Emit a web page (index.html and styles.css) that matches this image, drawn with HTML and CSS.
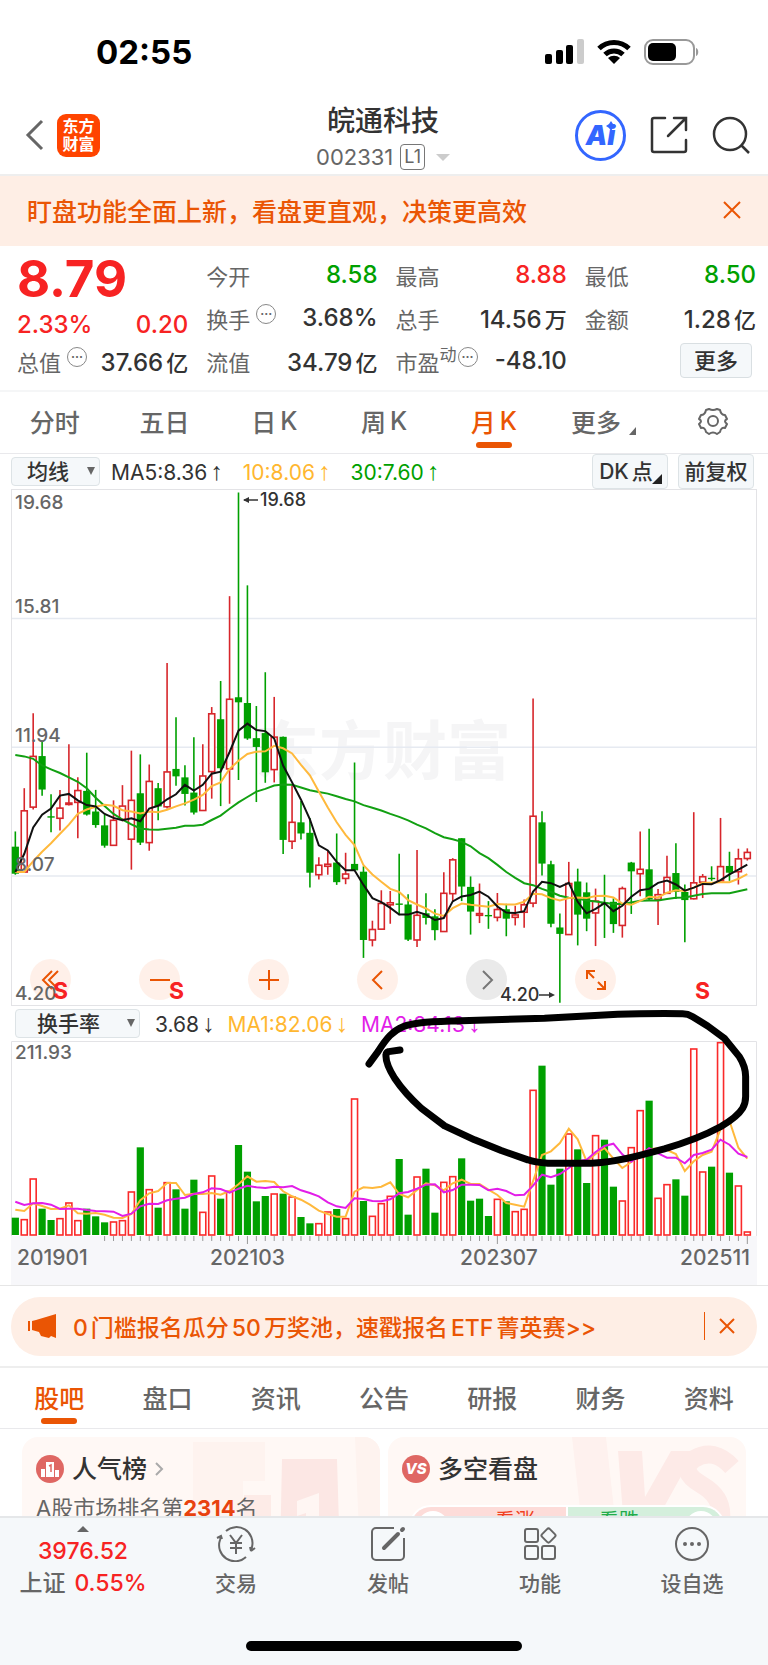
FILE: index.html
```
<!DOCTYPE html>
<html lang="zh-CN">

<head>
    <meta charset="UTF-8">
    <meta name="viewport" content="width=device-width, initial-scale=1.0">
    <title>皖通科技 002331</title>
    <link rel="stylesheet" href="styles.css">
</head>

<body>
    <div class="app">
        <div class="status-bar">
            <span class="clock">02:55</span>
            <div class="status-icons">
                <svg width="39" height="26" viewBox="0 0 39 26">
                    <rect x="0" y="15" width="7" height="10" rx="2" />
                    <rect x="11" y="11" width="7" height="14" rx="2" />
                    <rect x="21" y="6" width="7" height="19" rx="2" />
                    <rect x="32" y="0" width="7" height="25" rx="2" fill="#ccc" />
                </svg>
                <svg width="36" height="26" viewBox="0 0 36 26">
                    <path d="M3 9.500a21.500 21.500 0 0 1 30 0M9 15.500a13 13 0 0 1 18 0" fill="none" stroke="#000" stroke-width="5" />
                    <path d="M18 25l-6-6a9 9 0 0 1 12 0z" />
                </svg>
                <svg width="56" height="26" viewBox="0 0 56 26">
                    <rect x="1" y="1" width="49" height="24" rx="8" fill="none" stroke="#999" stroke-width="2" />
                    <rect x="4" y="4" width="28" height="18" rx="5" />
                    <path d="M52 9c3 1 3 7 0 8z" fill="#999" />
                </svg>
            </div>
        </div>

        <header class="header">
            <div class="header-left">
                <button class="icon-button" aria-label="返回">
                    <svg width="20" height="32" viewBox="0 0 20 32"><path d="M17 2L3 16l14 14" fill="none" stroke="#666" stroke-width="3" /></svg>
                </button>
                <a href="#" class="logo"><span>东方</span><span>财富</span></a>
            </div>
            <div class="stock">
                <h1>皖通科技</h1>
                <button class="stock-code">002331 <span class="level">L1</span><span class="caret"></span></button>
            </div>
            <div class="header-right">
                <button class="ai-button">Ai<svg class="ai-star" width="10" height="10" viewBox="0 0 10 10"><path d="M5 0l2 3 3 2-3 2-2 3-2-3-3-2 3-2z" fill="#3366ff" /></svg></button>
                <button class="icon-button" aria-label="分享">
                    <svg width="38" height="38" viewBox="0 0 38 38" fill="none" stroke="#333" stroke-width="2.500" stroke-linecap="round"><path d="M15 2H4a2 2 0 0 0-2 2v30a2 2 0 0 0 2 2h30a2 2 0 0 0 2-2V24M24 2h12v12M36 2L18 20" /></svg>
                </button>
                <button class="icon-button" aria-label="搜索">
                    <svg width="38" height="38" viewBox="0 0 38 38" fill="none" stroke="#333" stroke-width="2.500"><circle cx="18" cy="18" r="16" /><path d="M29 29l8 8" /></svg>
                </button>
            </div>
        </header>

        <main class="content">
            <div class="notice">
                <span>盯盘功能全面上新，看盘更直观，决策更高效</span>
                <button class="icon-button" aria-label="关闭">
                    <svg width="18" height="18" viewBox="0 0 18 18"><path d="M1 1l16 16M17 1L1 17" stroke="#ea5504" stroke-width="2" /></svg>
                </button>
            </div>

            <section class="quote">
                <div class="quote-col">
                    <div class="price">8.79</div>
                    <div class="quote-item change"><span>2.33%</span><span>0.20</span></div>
                    <div class="quote-item"><span class="label">总值<i class="info">···</i></span><b>37.66<em>亿</em></b></div>
                </div>
                <div class="quote-col">
                    <div class="quote-item"><span class="label">今开</span><b class="down">8.58</b></div>
                    <div class="quote-item"><span class="label">换手<i class="info">···</i></span><b>3.68%</b></div>
                    <div class="quote-item"><span class="label">流值</span><b>34.79<em>亿</em></b></div>
                </div>
                <div class="quote-col">
                    <div class="quote-item"><span class="label">最高</span><b class="up">8.88</b></div>
                    <div class="quote-item"><span class="label">总手</span><b>14.56<em>万</em></b></div>
                    <div class="quote-item"><span class="label">市盈<small>动</small><i class="info tight">···</i></span><b>-48.10</b></div>
                </div>
                <div class="quote-col">
                    <div class="quote-item"><span class="label">最低</span><b class="down">8.50</b></div>
                    <div class="quote-item"><span class="label">金额</span><b>1.28<em>亿</em></b></div>
                    <div class="quote-item end"><button class="more-button">更多</button></div>
                </div>
            </section>

            <nav class="tabs">
                <a href="#">分时</a>
                <a href="#">五日</a>
                <a href="#">日<em>K</em></a>
                <a href="#">周<em>K</em></a>
                <a href="#" class="active">月<em>K</em></a>
                <a href="#">更多<i class="corner"></i></a>
                <a href="#" aria-label="设置">
                    <svg width="30" height="28" viewBox="0 0 30 28" fill="none" stroke="#666" stroke-width="2"><path d="M11 2Q15 4 19 2L22 3Q23 8 27 8L29 12Q25 14 29 17L27 21Q23 20 22 25L19 27Q15 24 11 27L8 25Q7 20 3 21L1 17Q5 14 1 12L3 8Q7 8 8 3Z" stroke-linejoin="round" /><circle cx="15" cy="14" r="5" /></svg>
                </a>
            </nav>

            <div class="chart-bar">
                <div class="select-box">
                    <select aria-label="主图指标"><option>均线</option></select>
                </div>
                <div class="legend">
                    <span>MA5:8.36<i>↑</i></span>
                    <span class="yellow">10:8.06<i>↑</i></span>
                    <span class="down">30:7.60<i>↑</i></span>
                </div>
                <div class="chart-actions">
                    <button class="dk">DK<em>点</em></button>
                    <button>前复权</button>
                </div>
            </div>

            <div class="chart">
                <svg id="kline" viewBox="0 0 746 517"></svg>
                <div class="chart-tools">
                    <button aria-label="最早"><svg width="20" height="20" viewBox="0 0 20 20"><path d="M11 1l-9 9 9 9M17 1l-9 9 9 9" /></svg></button>
                    <button aria-label="缩小"><svg width="20" height="20" viewBox="0 0 20 20"><path d="M0 10h20" /></svg></button>
                    <button aria-label="放大"><svg width="20" height="20" viewBox="0 0 20 20"><path d="M0 10h20M10 0v20" /></svg></button>
                    <button aria-label="左移"><svg width="20" height="20" viewBox="0 0 20 20"><path d="M14 1l-9 9 9 9" /></svg></button>
                    <button class="gray" aria-label="右移"><svg width="20" height="20" viewBox="0 0 20 20"><path d="M6 1l9 9-9 9" /></svg></button>
                    <button aria-label="全屏"><svg width="20" height="20" viewBox="0 0 20 20"><path d="M1 9V1h8M1 1l7 7M19 11v8h-8M19 19l-7-7" /></svg></button>
                </div>
                <svg class="marks" viewBox="0 0 746 517">
                    <text x="4" y="20">19.68</text>
                    <text x="4" y="124">15.81</text>
                    <text x="4" y="253">11.94</text>
                    <text x="4" y="382">8.07</text>
                    <text x="4" y="511">4.20</text>
                    <text x="42" y="510" class="sell">S</text>
                    <text x="158" y="510" class="sell">S</text>
                    <text x="684" y="510" class="sell">S</text>
                </svg>
            </div>

            <div class="volume">
                <div class="volume-bar">
                    <div class="select-box wide">
                        <select aria-label="副图指标"><option>换手率</option></select>
                    </div>
                    <div class="legend">
                        <span>3.68<i>↓</i></span>
                        <span class="yellow">MA1:82.06<i>↓</i></span>
                        <span class="magenta">MA2:84.13<i>↓</i></span>
                    </div>
                </div>
                <svg id="turnover" viewBox="0 0 746 244"></svg>
                <svg class="scribble" viewBox="0 0 746 279">
                    <path transform="translate(367 -6) scale(.333)" d="M-27 192L0 155C25 115 45 92 75 80C110 66 150 66 250 62L500 55L720 43Q800 40 915 41Q930 41 945 50L990 78L1040 115L1085 170Q1104 200 1104 230V290Q1104 310 1095 325Q1080 350 1030 380Q960 418 860 447L780 468Q700 488 640 490H510Q470 488 450 480L370 452L290 420L200 378L130 325Q80 280 50 235Q22 190 24 165Q24 158 32 155L66 150" />
                </svg>
            </div>

            <div class="promo-row">
                <div class="promo">
                    <svg width="28" height="24" viewBox="0 0 28 24" fill="#ea5504"><rect y="7" width="2" height="10" /><path d="M4 7l4-1L28 0v24l-5-2-2 2-8-2-2-4-7-2z" /></svg>
                    <a href="#"><em>0</em>门槛报名瓜分<em>50</em>万奖池，速戳报名<em>ETF</em>菁英赛&gt;&gt;</a>
                    <button class="icon-button" aria-label="关闭">
                        <svg width="16" height="16" viewBox="0 0 16 16"><path d="M1 1l14 14M15 1L1 15" stroke="#ea5504" stroke-width="2" /></svg>
                    </button>
                </div>
            </div>

            <nav class="tabs sub-tabs">
                <a href="#" class="active">股吧</a>
                <a href="#">盘口</a>
                <a href="#">资讯</a>
                <a href="#">公告</a>
                <a href="#">研报</a>
                <a href="#">财务</a>
                <a href="#">资料</a>
            </nav>

            <div class="cards">
                <div class="card">
                    <svg class="card-art" width="190" height="120" viewBox="0 0 190 120">
                        <path d="M3 5h72v39H53v76H3z" fill="#fef3ef" /><path d="M54 58h27v62H54z" fill="#fdebe7" /><path d="M92 22h55l3 98H90z" fill="#fce7e4" /><path d="M107 64l22-8v64h-13V76l-9 3z" fill="#fff6f3" /><path d="M165 0h25v120h-20z" fill="#fef3ef" />
                    </svg>
                    <h2>
                        <svg width="28" height="28" viewBox="0 0 28 28"><circle cx="14" cy="14" r="14" fill="#df6763" /><path d="M5 14h4v8H5zM10 7h8v15h-8zM19 15h4v7h-4z" fill="#fff" /><path d="M13 11l2-1v7" fill="none" stroke="#df6763" stroke-width="1.500" /></svg>
                        人气榜
                        <svg width="9" height="14" viewBox="0 0 9 14"><path d="M1 1l6 6-6 6" fill="none" stroke="#aaa" stroke-width="2" /></svg>
                    </h2>
                    <p>A股市场排名第<b>2314</b>名</p>
                </div>
                <div class="card">
                    <svg class="card-art" width="190" height="120" viewBox="0 0 190 120">
                        <path d="M16 0h34l10 90H26z" fill="#fef1ee" /><path d="M62 14h24l3 46 26-46h24l-42 76H68z" fill="#fdeae7" /><path d="M176 30Q158 10 138 22q-16 12 8 26 24 14 18 40" fill="none" stroke="#fdeae7" stroke-width="18" />
                    </svg>
                    <h2>
                        <span class="vs">VS</span>
                        多空看盘
                    </h2>
                    <div class="vote"><span class="bull">看涨</span><span class="bear">看跌</span></div>
                </div>
            </div>
        </main>

        <footer class="bottom-bar">
            <a href="#" class="index">
                <span class="up-caret"></span>
                <span class="up">3976.52</span>
                <span class="index-name">上证 <span class="up">0.55%</span></span>
            </a>
            <a href="#">
                <svg width="40" height="36" viewBox="0 0 40 36"><path d="M10 5a16 16 0 0 1 26 16l-1 4M35 25l4-3M35 25l-1-4M30 31A16 16 0 0 1 4 14l1-4M1 12l4-2 1 3M14 9l6 8 6-8M20 17v11M14 17h12M14 22h12" /></svg>
                <span>交易</span>
            </a>
            <a href="#">
                <svg width="36" height="36" viewBox="0 0 36 36"><path d="M24 2H6a4 4 0 0 0-4 4v24a4 4 0 0 0 4 4h24a4 4 0 0 0 4-4V12" /><path class="pen" d="M14 22L28 8M32 4l1-1" /></svg>
                <span>发帖</span>
            </a>
            <a href="#">
                <svg width="34" height="36" viewBox="0 0 34 36"><rect x="2" y="3" width="13" height="13" rx="2" /><rect x="2" y="20" width="13" height="13" rx="2" /><rect x="19" y="20" width="13" height="13" rx="2" /><rect x="20" y="4" width="11" height="11" rx="2" transform="rotate(45 25.500 9.500)" /></svg>
                <span>功能</span>
            </a>
            <a href="#">
                <svg width="36" height="36" viewBox="0 0 36 36"><circle cx="18" cy="18" r="16" /><path class="dots" d="M11 18h0M18 18h0M25 18h0" /></svg>
                <span>设自选</span>
            </a>
            <div class="home-indicator"></div>
        </footer>
    </div>
    <script src="chart.js"></script>
</body>

</html>
```
FILE: styles.css
```
* {
    box-sizing: border-box;
}

body {
    margin: 0;
    font-family: Inter, "Noto Sans CJK SC", sans-serif;
    color: #333;
    background: #fff;
}

button,
select {
    font: inherit;
    color: inherit;
    border: none;
    padding: 0;
    background: none;
    cursor: pointer;
}

a {
    color: inherit;
    text-decoration: none;
}

em,
i {
    font-style: normal;
}

svg {
    display: block;
}

.up {
    color: #f72323;
}

.down {
    color: #00a000;
}

.yellow {
    color: #ffb730;
}

.magenta {
    color: #e21ee8;
}

.app {
    height: 100vh;
    display: flex;
    flex-direction: column;
}

.status-bar {
    height: 96px;
    padding: 8px 68px 0 96px;
    display: flex;
    align-items: center;
    justify-content: space-between;
}

.clock {
    font-size: 33px;
    font-weight: 700;
    color: #000;
}

.status-icons {
    display: flex;
    gap: 12px;
}

/* header */
.header {
    height: 80px;
    padding: 0 18px 0 16px;
    display: grid;
    grid-template-columns: 1fr auto 1fr;
    align-items: center;
    border-bottom: 2px solid #eee;
}

.header-left,
.header-right {
    display: flex;
    align-items: center;
}

.header-left {
    gap: 12px;
    padding-left: 9px;
}

.header-right {
    justify-content: flex-end;
    gap: 24px;
}

.logo {
    width: 43px;
    height: 43px;
    border-radius: 9px;
    background: #ff4400;
    color: #fff;
    font-size: 16px;
    line-height: 18px;
    font-weight: 700;
    display: flex;
    flex-direction: column;
    align-items: center;
    justify-content: center;
}

.stock {
    padding-top: 6px;
    display: flex;
    flex-direction: column;
    align-items: center;
}

.stock h1 {
    margin: 0;
    font-size: 28px;
    line-height: 38px;
    font-weight: 500;
}

.stock-code {
    display: flex;
    align-items: center;
    gap: 7px;
    font-size: 22px;
    line-height: 34px;
    color: #666;
}

.level {
    padding: 0 3px;
    border: 1px solid #777;
    border-radius: 4px;
    font-size: 18px;
    line-height: 24px;
}

.caret {
    margin-left: 4px;
    border: 7px solid transparent;
    border-top-color: #ccc;
    border-bottom: none;
}

.ai-button {
    position: relative;
    width: 51px;
    height: 51px;
    border: 3px solid #3366ff;
    border-radius: 50%;
    color: #3366ff;
    font-size: 27px;
    font-weight: 900;
    font-style: italic;
}

.ai-star {
    position: absolute;
    top: 8px;
    right: 7px;
}

/* notice */
.content {
    flex: 1;
    min-height: 0;
    overflow-y: auto;
    scrollbar-width: none;
}

.notice {
    height: 70px;
    padding: 0 27px 2px;
    display: flex;
    align-items: center;
    justify-content: space-between;
    background: #feeee5;
    color: #ea5504;
    font-size: 25px;
    font-weight: 500;
}

/* quote */
.quote {
    padding: 7px 12px 8px 17px;
    display: grid;
    grid-template-columns: repeat(4, 1fr);
    gap: 18px;
    border-bottom: 2px solid #f5f6f7;
}

.quote-item {
    height: 43px;
    display: flex;
    align-items: center;
    justify-content: space-between;
    font-size: 24px;
    font-weight: 500;
    white-space: nowrap;
}

.quote-item b {
    font-weight: 500;
}

.quote-item em {
    margin-left: 3px;
    font-size: 22px;
}

.quote-item .label {
    display: flex;
    align-items: center;
    color: #666;
    font-size: 22px;
    font-weight: 400;
}

.quote-item small {
    font-size: 17px;
    align-self: flex-start;
    line-height: 20px;
}

.quote-item.end {
    justify-content: flex-end;
}

.price {
    height: 50px;
    font-size: 51px;
    line-height: 52px;
    font-weight: 700;
    color: #f72323;
}

.quote-item.change {
    height: 36px;
    padding-top: 6px;
    color: #f72323;
}

.info {
    width: 20px;
    height: 20px;
    margin: 0 0 8px 6px;
    border: 1px solid #888;
    border-radius: 50%;
    font-size: 12px;
    line-height: 17px;
    text-align: center;
    font-weight: 700;
}

.info.tight {
    margin-left: 1px;
}

.more-button {
    width: 72px;
    height: 35px;
    margin-right: 4px;
    border: 1px solid #d9dfe2;
    border-radius: 4px;
    background: #f5f8fa;
    font-size: 22px;
    line-height: 32px;
}

/* tabs */
.tabs {
    height: 62px;
    padding-bottom: 3px;
    display: flex;
    border-bottom: 1px solid #e9e9ec;
    color: #666;
    font-size: 25px;
    font-weight: 500;
}

.tabs a {
    flex: 1;
    display: flex;
    align-items: center;
    justify-content: center;
    position: relative;
}

.tabs em {
    margin-left: 4px;
}

.tabs .active {
    color: #ea5504;
}

.tabs .active::after {
    content: "";
    position: absolute;
    bottom: 2px;
    width: 36px;
    height: 6px;
    border-radius: 3px;
    background: #ea5504;
}

.corner {
    margin: 20px 0 0 8px;
    border-left: 7px solid transparent;
    border-bottom: 8px solid #666;
}

/* chart */
.chart-bar {
    height: 35px;
    padding: 0 14px 0 11px;
    display: flex;
    align-items: center;
}

.select-box {
    position: relative;
    width: 89px;
    height: 29px;
}

.select-box.wide {
    width: 125px;
}

.select-box select {
    appearance: none;
    width: 100%;
    height: 100%;
    padding: 0 15px;
    border: 1px solid #dde3e6;
    border-radius: 4px;
    background: #f5f8fa;
    font-size: 21px;
    line-height: 26px;
    font-weight: 500;
}

.select-box.wide select {
    padding: 0 21px;
}

.select-box::after {
    content: "";
    position: absolute;
    top: 10px;
    right: 5px;
    border: 4px solid transparent;
    border-top: 8px solid #666;
    border-bottom: none;
    pointer-events: none;
}

.legend {
    display: flex;
    gap: 20px;
    margin-left: 11px;
    font-size: 21px;
    line-height: 26px;
    white-space: nowrap;
}

.legend i {
    margin-left: 3px;
    font-family: "Liberation Sans", sans-serif;
    font-size: 25px;
}

.chart-actions {
    display: flex;
    gap: 10px;
    margin-left: auto;
}

.chart-actions button {
    position: relative;
    width: 76px;
    height: 35px;
    border: 1px solid #dde3e6;
    border-radius: 4px;
    background: #f5f8fa;
    font-size: 21px;
    line-height: 32px;
    font-weight: 500;
}

.dk em {
    margin: 0 8px 0 3px;
}

.dk::after {
    content: "";
    position: absolute;
    right: 5px;
    bottom: 4px;
    border-left: 10px solid transparent;
    border-bottom: 10px solid #222;
}

.chart,
.volume {
    position: relative;
    margin: 0 11px;
}

.chart svg text,
.volume svg text {
    font-size: 19px;
    font-weight: 500;
    fill: #666;
}

.chart svg .watermark {
    font-size: 64px;
    font-weight: 700;
    fill: #f5f5f6;
}

.chart svg .mark {
    font-size: 18px;
    fill: #333;
}

.volume svg .date {
    font-size: 21px;
}

.chart .marks {
    position: absolute;
    inset: 0;
    pointer-events: none;
}

.chart .marks .sell {
    font-size: 23px;
    font-weight: 700;
    fill: #f72323;
}

.chart-tools {
    position: absolute;
    left: 19px;
    bottom: 6px;
    width: 586px;
    display: flex;
    justify-content: space-between;
}

.chart-tools button {
    width: 41px;
    height: 41px;
    border-radius: 50%;
    background: rgba(255, 235, 225, 0.75);
    display: flex;
    align-items: center;
    justify-content: center;
}

.chart-tools path {
    fill: none;
    stroke: #ea5504;
    stroke-width: 2;
}

.chart-tools .gray {
    background: #eaeaea;
}

.chart-tools .gray path {
    stroke: #777;
}

.volume-bar {
    height: 35px;
    padding: 0 4px;
    display: flex;
    align-items: center;
}

.volume-bar .legend {
    margin-left: 15px;
    gap: 13px;
}

.scribble {
    position: absolute;
    inset: 0;
    overflow: visible;
    pointer-events: none;
}

.scribble path {
    fill: none;
    stroke: #000;
    stroke-width: 21;
    stroke-linecap: round;
    stroke-linejoin: round;
}

/* promo */
.promo-row {
    padding: 11px 11px 10px;
    border-top: 1px solid #e6e6e6;
}

.promo {
    height: 59px;
    padding: 0 22px 2px 17px;
    display: flex;
    align-items: center;
    gap: 17px;
    border-radius: 29px;
    background: #feeee5;
    color: #ea5504;
    font-size: 23px;
    font-weight: 500;
}

.promo a {
    flex: 1;
}

.promo em {
    margin: 0 3px;
}

.promo em:first-child {
    margin-left: 0;
}

.promo .icon-button {
    padding: 6px 0 6px 14px;
    border-left: 1px solid #ea5504;
}

.sub-tabs {
    height: 63px;
    padding: 0 5px 2px;
    border-top: 2px solid #eee;
}

/* cards */
.cards {
    padding: 8px 22px;
    display: grid;
    grid-template-columns: 1fr 1fr;
    gap: 8px;
}

.card {
    position: relative;
    height: 120px;
    padding: 14px;
    border-radius: 16px;
    background: #fff8f5;
    overflow: hidden;
}

.card-art {
    position: absolute;
    top: 0;
    right: 0;
}

.card h2 {
    position: relative;
    margin: 0;
    display: flex;
    align-items: center;
    gap: 8px;
    font-size: 25px;
    line-height: 36px;
    font-weight: 500;
}

.card p {
    position: relative;
    margin: 5px 0 0;
    color: #666;
    font-size: 22px;
    line-height: 32px;
}

.card b {
    color: #e8420f;
}

.vs {
    width: 28px;
    height: 28px;
    border-radius: 50%;
    background: #df6763;
    color: #fff;
    font-size: 15px;
    line-height: 28px;
    font-weight: 800;
    font-style: italic;
    text-align: center;
}

.vote {
    position: relative;
    margin: 18px 7px 0;
    height: 44px;
    display: flex;
    border-radius: 22px;
    border: 2px solid #fff;
    overflow: hidden;
    font-size: 20px;
    line-height: 28px;
}

.vote span {
    flex: 1;
    display: flex;
    gap: 40px;
}

.vote .bull::before,
.vote .bear::after {
    content: "";
    width: 32px;
    height: 32px;
    margin: 4px 6px;
    border-radius: 50%;
    background: #fff;
}

.bull {
    background: #fddcd9;
    color: #f04020;
    border-right: 2px solid #fff;
}

.bear {
    justify-content: flex-end;
    background: #d4efdc;
    color: #22ac4a;
}

/* bottom bar */
.bottom-bar {
    position: relative;
    height: 149px;
    padding-top: 8px;
    display: grid;
    grid-template-columns: 160px repeat(4, 1fr);
    align-items: start;
    background: #f5f8fa;
    border-top: 2px solid #e5e7e9;
    color: #666;
    font-size: 21px;
    font-weight: 500;
    line-height: 32px;
}

.bottom-bar a {
    display: flex;
    flex-direction: column;
    align-items: center;
    gap: 6px;
}

.bottom-bar path,
.bottom-bar rect,
.bottom-bar circle {
    fill: none;
    stroke: #666;
    stroke-width: 2;
}

.bottom-bar .pen,
.bottom-bar .dots {
    stroke-width: 4;
    stroke-linecap: round;
}

.bottom-bar .index {
    gap: 0;
    padding-left: 6px;
    font-size: 23px;
}

.index-name {
    display: flex;
    gap: 9px;
}

.up-caret {
    margin-bottom: 3px;
    border: 6px solid transparent;
    border-bottom-color: #666;
    border-top: none;
}

.home-indicator {
    position: absolute;
    left: 50%;
    bottom: 14px;
    width: 276px;
    height: 10px;
    margin-left: -138px;
    border-radius: 5px;
    background: #000;
}
```
FILE: chart.js
```
// Series values are in chart units, one entry per month, growing downwards.
const STEP = 26.78;
const FIRST = 13;
const KLINE_SCALE = 2.958;
const VOLUME_SCALE = 3;
const RED = '#d7262b';
const GREEN = '#00a000';

// [direction, high, body top, body bottom, low]
const candles = [
    ['g', 1040, 1085, 1165, 1168], ['r', 912, 976, 1160, 1160], ['r', 690, 815, 968, 975], ['g', 772, 817, 916, 934],
    ['g', 930, 995, 999, 1042], ['r', 917, 968, 1001, 1037], ['r', 782, 953, 960, 963], ['r', 880, 916, 954, 1060],
    ['g', 807, 920, 990, 993], ['g', 917, 981, 1021, 1029], ['g', 990, 1022, 1082, 1088], ['r', 948, 1004, 1081, 1081],
    ['r', 903, 962, 1004, 1010], ['r', 801, 945, 1063, 1153], ['g', 812, 927, 1073, 1080], ['r', 842, 889, 1073, 1097],
    ['g', 897, 912, 966, 1007], ['r', 542, 861, 967, 972], ['g', 702, 855, 877, 905], ['g', 844, 880, 929, 963],
    ['g', 761, 925, 984, 990], ['r', 782, 873, 978, 978], ['r', 672, 689, 863, 943], ['g', 595, 708, 853, 965],
    ['r', 344, 646, 855, 958], ['g', 37, 643, 658, 888], ['g', 312, 660, 765, 769], ['g', 669, 764, 790, 953],
    ['g', 569, 749, 865, 896], ['r', 642, 758, 857, 895], ['g', 759, 760, 1065, 1107], ['r', 900, 1010, 1069, 1092],
    ['g', 950, 1013, 1046, 1064], ['g', 1000, 1044, 1162, 1206], ['r', 1116, 1137, 1168, 1182], ['r', 1098, 1134, 1143, 1168],
    ['g', 1046, 1132, 1190, 1198], ['r', 1103, 1163, 1179, 1196], ['g', 836, 1136, 1155, 1155], ['g', 1143, 1159, 1361, 1414],
    ['r', 1304, 1327, 1361, 1380], ['r', 1214, 1250, 1329, 1330], ['r', 1216, 1248, 1257, 1313], ['g', 1106, 1253, 1257, 1288],
    ['g', 1226, 1256, 1360, 1364], ['r', 1095, 1285, 1361, 1382], ['g', 1223, 1282, 1296, 1315], ['g', 1270, 1291, 1332, 1362],
    ['r', 1161, 1220, 1336, 1336], ['r', 1119, 1121, 1224, 1247], ['g', 1060, 1060, 1203, 1246], ['g', 1173, 1204, 1277, 1345],
    ['r', 1194, 1280, 1288, 1311], ['g', 1246, 1287, 1291, 1328], ['r', 1222, 1268, 1294, 1306], ['g', 1254, 1270, 1298, 1350],
    ['r', 1260, 1284, 1294, 1318], ['r', 1241, 1254, 1279, 1325], ['r', 647, 992, 1252, 1264], ['g', 980, 1013, 1135, 1170],
    ['g', 1127, 1137, 1313, 1323], ['g', 1283, 1324, 1343, 1547], ['r', 1130, 1191, 1345, 1345], ['g', 1150, 1188, 1286, 1377],
    ['g', 1191, 1220, 1298, 1335], ['r', 1209, 1243, 1281, 1379], ['g', 1168, 1250, 1254, 1355], ['g', 1238, 1248, 1314, 1340],
    ['r', 1203, 1206, 1318, 1354], ['g', 1130, 1132, 1158, 1284], ['r', 1040, 1149, 1165, 1232], ['g', 1032, 1152, 1241, 1243],
    ['r', 1210, 1224, 1241, 1317], ['r', 1112, 1173, 1223, 1225], ['g', 1075, 1163, 1219, 1240], ['g', 1197, 1219, 1243, 1368],
    ['r', 983, 1189, 1239, 1241], ['r', 1166, 1171, 1190, 1237], ['g', 1143, 1177, 1181, 1186], ['r', 1000, 1141, 1186, 1186],
    ['g', 1100, 1142, 1162, 1186], ['r', 1091, 1118, 1159, 1197], ['r', 1090, 1099, 1120, 1126]
];

const ma5 = [1160, 1106, 1028, 990, 972, 934, 929, 948, 962, 966, 988, 1000, 1007, 1001, 1010, 972, 964, 945, 930, 902, 919, 902, 869, 863, 805, 742, 721, 740, 743, 765, 845, 895, 946, 1004, 1081, 1096, 1130, 1155, 1155, 1198, 1237, 1249, 1266, 1286, 1286, 1278, 1286, 1302, 1296, 1247, 1232, 1228, 1218, 1233, 1262, 1280, 1281, 1276, 1218, 1189, 1193, 1204, 1192, 1248, 1282, 1269, 1252, 1276, 1260, 1233, 1214, 1210, 1192, 1185, 1197, 1215, 1206, 1195, 1196, 1184, 1167, 1153, 1138];
const ma10 = [1160, 1160, 1128, 1100, 1075, 1047, 1020, 988, 975, 967, 961, 964, 977, 981, 987, 981, 983, 976, 966, 957, 946, 932, 906, 895, 855, 831, 811, 804, 803, 787, 794, 809, 843, 874, 922, 969, 1013, 1050, 1080, 1140, 1167, 1189, 1210, 1219, 1243, 1256, 1268, 1283, 1290, 1267, 1253, 1257, 1260, 1263, 1255, 1256, 1256, 1248, 1224, 1226, 1237, 1244, 1237, 1235, 1237, 1231, 1230, 1235, 1253, 1257, 1245, 1233, 1235, 1221, 1214, 1216, 1206, 1192, 1192, 1190, 1190, 1180, 1166];
const ma30 = [814, 818, 825, 845, 856, 867, 880, 893, 912, 940, 965, 988, 1005, 1019, 1031, 1034, 1035, 1032, 1029, 1023, 1023, 1020, 1006, 993, 973, 954, 938, 922, 914, 904, 901, 902, 910, 918, 923, 928, 936, 944, 951, 962, 970, 978, 988, 997, 1007, 1020, 1031, 1045, 1057, 1063, 1071, 1084, 1104, 1119, 1139, 1160, 1177, 1193, 1199, 1210, 1219, 1230, 1236, 1238, 1244, 1247, 1251, 1255, 1255, 1250, 1245, 1244, 1244, 1240, 1236, 1235, 1230, 1225, 1223, 1223, 1223, 1217, 1211];

const bars = [655, 658, 536, 628, 662, 655, 608, 661, 628, 651, 669, 665, 661, 575, 444, 568, 625, 547, 570, 628, 541, 636, 527, 598, 573, 437, 517, 606, 590, 581, 583, 590, 653, 672, 670, 635, 629, 655, 296, 605, 648, 610, 588, 479, 646, 530, 508, 640, 546, 529, 477, 604, 598, 650, 597, 606, 634, 627, 270, 199, 556, 508, 401, 450, 551, 406, 421, 562, 602, 442, 331, 304, 594, 553, 540, 589, 146, 515, 502, 127, 520, 557, 695];
const barColors = 'grrggrrrgggrrrgrgrggg' + 'rrgrggggrgrggrrgrrgrrrggrggrrggggrgrrrggg' + 'rggrggrrrgrrggrrgrgrr';
const vma1 = [631, 635, 612, 620, 629, 628, 618, 642, 643, 641, 646, 655, 656, 644, 603, 582, 575, 551, 551, 587, 583, 584, 581, 586, 575, 555, 531, 547, 545, 548, 576, 591, 601, 616, 634, 644, 652, 652, 577, 564, 566, 562, 549, 584, 594, 572, 552, 558, 573, 552, 541, 554, 554, 571, 587, 611, 616, 622, 545, 467, 456, 431, 388, 420, 486, 464, 446, 478, 506, 488, 467, 450, 447, 452, 464, 515, 486, 467, 457, 390, 365, 445, 478];
const vma2 = [607, 617, 612, 611, 616, 629, 628, 628, 632, 635, 636, 637, 650, 643, 621, 613, 614, 603, 598, 595, 584, 579, 567, 569, 580, 568, 559, 564, 566, 562, 564, 560, 573, 581, 591, 609, 621, 626, 597, 599, 605, 606, 600, 582, 578, 568, 556, 555, 579, 572, 556, 556, 557, 573, 568, 575, 588, 586, 559, 526, 534, 524, 506, 486, 481, 458, 440, 433, 465, 487, 468, 447, 462, 475, 475, 492, 467, 461, 451, 421, 436, 463, 473];

function centerX(i) {
    return (FIRST + STEP * i) / 3;
}

function klineY(v) {
    return (v - 27) / KLINE_SCALE;
}

function volumeY(v) {
    return (v - 125) / VOLUME_SCALE;
}

function line(x1, y1, x2, y2, color, width) {
    return `<line x1="${x1}" y1="${y1}" x2="${x2}" y2="${y2}" stroke="${color}" stroke-width="${width}"/>`;
}

function text(x, y, value, cls) {
    return `<text x="${x}" y="${y}" class="${cls || ''}">${value}</text>`;
}

function average(values, toY, color) {
    const points = values.map((v, i) => `${centerX(i).toFixed(1)},${toY(v).toFixed(1)}`).join(' ');
    return `<polyline points="${points}" fill="none" stroke="${color}" stroke-width="2"/>`;
}

function body(i, top, bottom, hollow, color) {
    const x = centerX(i);
    if (hollow) {
        return `<rect x="${x - 3}" y="${top + 1}" width="6" height="${Math.max(bottom - top - 1, 1)}" fill="#fff" stroke="${color}" stroke-width="1.6"/>`;
    }
    return `<rect x="${x - 3.6}" y="${top}" width="7.2" height="${Math.max(bottom - top, 1.4)}" fill="${color}"/>`;
}

function drawKline() {
    let out = text(244, 285, '东方财富', 'watermark');
    [410, 791, 1172].forEach(v => out += line(0, klineY(v), 746, klineY(v), '#e6eaf1', 1.5));
    out += '<rect x="0.5" y="0.5" width="745" height="516" fill="none" stroke="#e3e3e6"/>';
    candles.forEach(([dir, high, open, close, low], i) => {
        const color = dir === 'r' ? RED : GREEN;
        out += line(centerX(i), klineY(high), centerX(i), klineY(low), color, 1.6);
        out += body(i, klineY(open), klineY(close), dir === 'r', color);
    });
    out += average(ma30, klineY, '#12a012') + average(ma10, klineY, '#ffb93c') + average(ma5, klineY, '#111');
    out += line(233, 11, 247, 11, '#333', 1.5) + '<path d="M238 8l-6 3 6 3z" fill="#333"/>' + text(249, 17, '19.68', 'mark');
    out += text(489, 512, '4.20', 'mark') + line(528, 506, 542, 506, '#333', 1.5) + '<path d="M538 503l6 3-6 3z" fill="#333"/>';
    document.getElementById('kline').innerHTML = out;
}

function drawTurnover() {
    const base = 195;
    let out = '<rect x="0" y="195" width="746" height="49" fill="#f7f7fa"/>';
    out += '<path d="M0.5 195V0.5H745.5V195" fill="none" stroke="#e3e3e6"/>';
    out += text(4, 18, '211.93');
    bars.forEach((v, i) => {
        const red = barColors[i] === 'r';
        out += body(i, volumeY(v), base - 1, red, red ? '#fa2a2a' : GREEN);
        if (i > 9) {
            out += line(centerX(i), base, centerX(i), base + (i % 28 === 26 ? 8 : 5), '#999', 1);
        }
    });
    out += average(vma1, volumeY, '#ffb93c') + average(vma2, volumeY, '#e21ee8');
    out += text(6, 224, '201901', 'date') + text(199, 224, '202103', 'date');
    out += text(449, 224, '202307', 'date') + text(669, 224, '202511', 'date');
    document.getElementById('turnover').innerHTML = out;
}

drawKline();
drawTurnover();
```
